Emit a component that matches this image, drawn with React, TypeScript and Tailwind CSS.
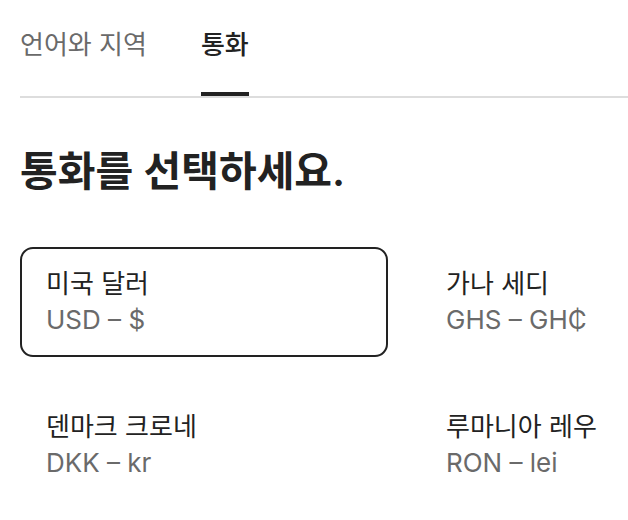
const tabs = [
  { label: '언어와 지역', active: false },
  { label: '통화', active: true },
];

const currencies = [
  { name: '미국 달러', code: 'USD – $', selected: true },
  { name: '가나 세디', code: 'GHS – GH₵', selected: false },
  { name: '덴마크 크로네', code: 'DKK – kr', selected: false },
  { name: '루마니아 레우', code: 'RON – lei', selected: false },
];

const App = () => {
  return (
    <div
      className="w-full min-h-[520px] overflow-hidden bg-white pl-5 text-[#222222]"
      style={{ fontFamily: 'Inter, "Noto Sans CJK KR", sans-serif' }}
    >
      <div className="flex gap-[54px] border-b-2 border-[#dddddd] pt-[29px]">
        {tabs.map((tab) => (
          <button
            key={tab.label}
            className={
              tab.active
                ? 'border-b-4 border-[#222222] pb-[31px] text-[26px] leading-[32px] font-medium text-[#222222]'
                : 'border-b-4 border-transparent pb-[31px] text-[26px] leading-[32px] text-[#6a6a6a]'
            }
          >
            {tab.label}
          </button>
        ))}
      </div>

      <h1 className="mt-[49px] text-[41px] leading-[48px] font-semibold">통화를 선택하세요.</h1>

      <div className="mt-[52px] grid w-max grid-cols-[368px_368px] gap-x-8 gap-y-[33px]">
        {currencies.map((c) => (
          <div
            key={c.code}
            className={
              c.selected
                ? 'rounded-[13px] border-2 border-[#222222] px-6 py-[17px]'
                : 'rounded-[13px] border-2 border-transparent px-6 py-[17px]'
            }
          >
            <div className="text-[26px] leading-[36px] text-[#222222]">{c.name}</div>
            <div className="text-[26px] leading-[36px] text-[#6a6a6a]">{c.code}</div>
          </div>
        ))}
      </div>
    </div>
  );
};

export default App;
